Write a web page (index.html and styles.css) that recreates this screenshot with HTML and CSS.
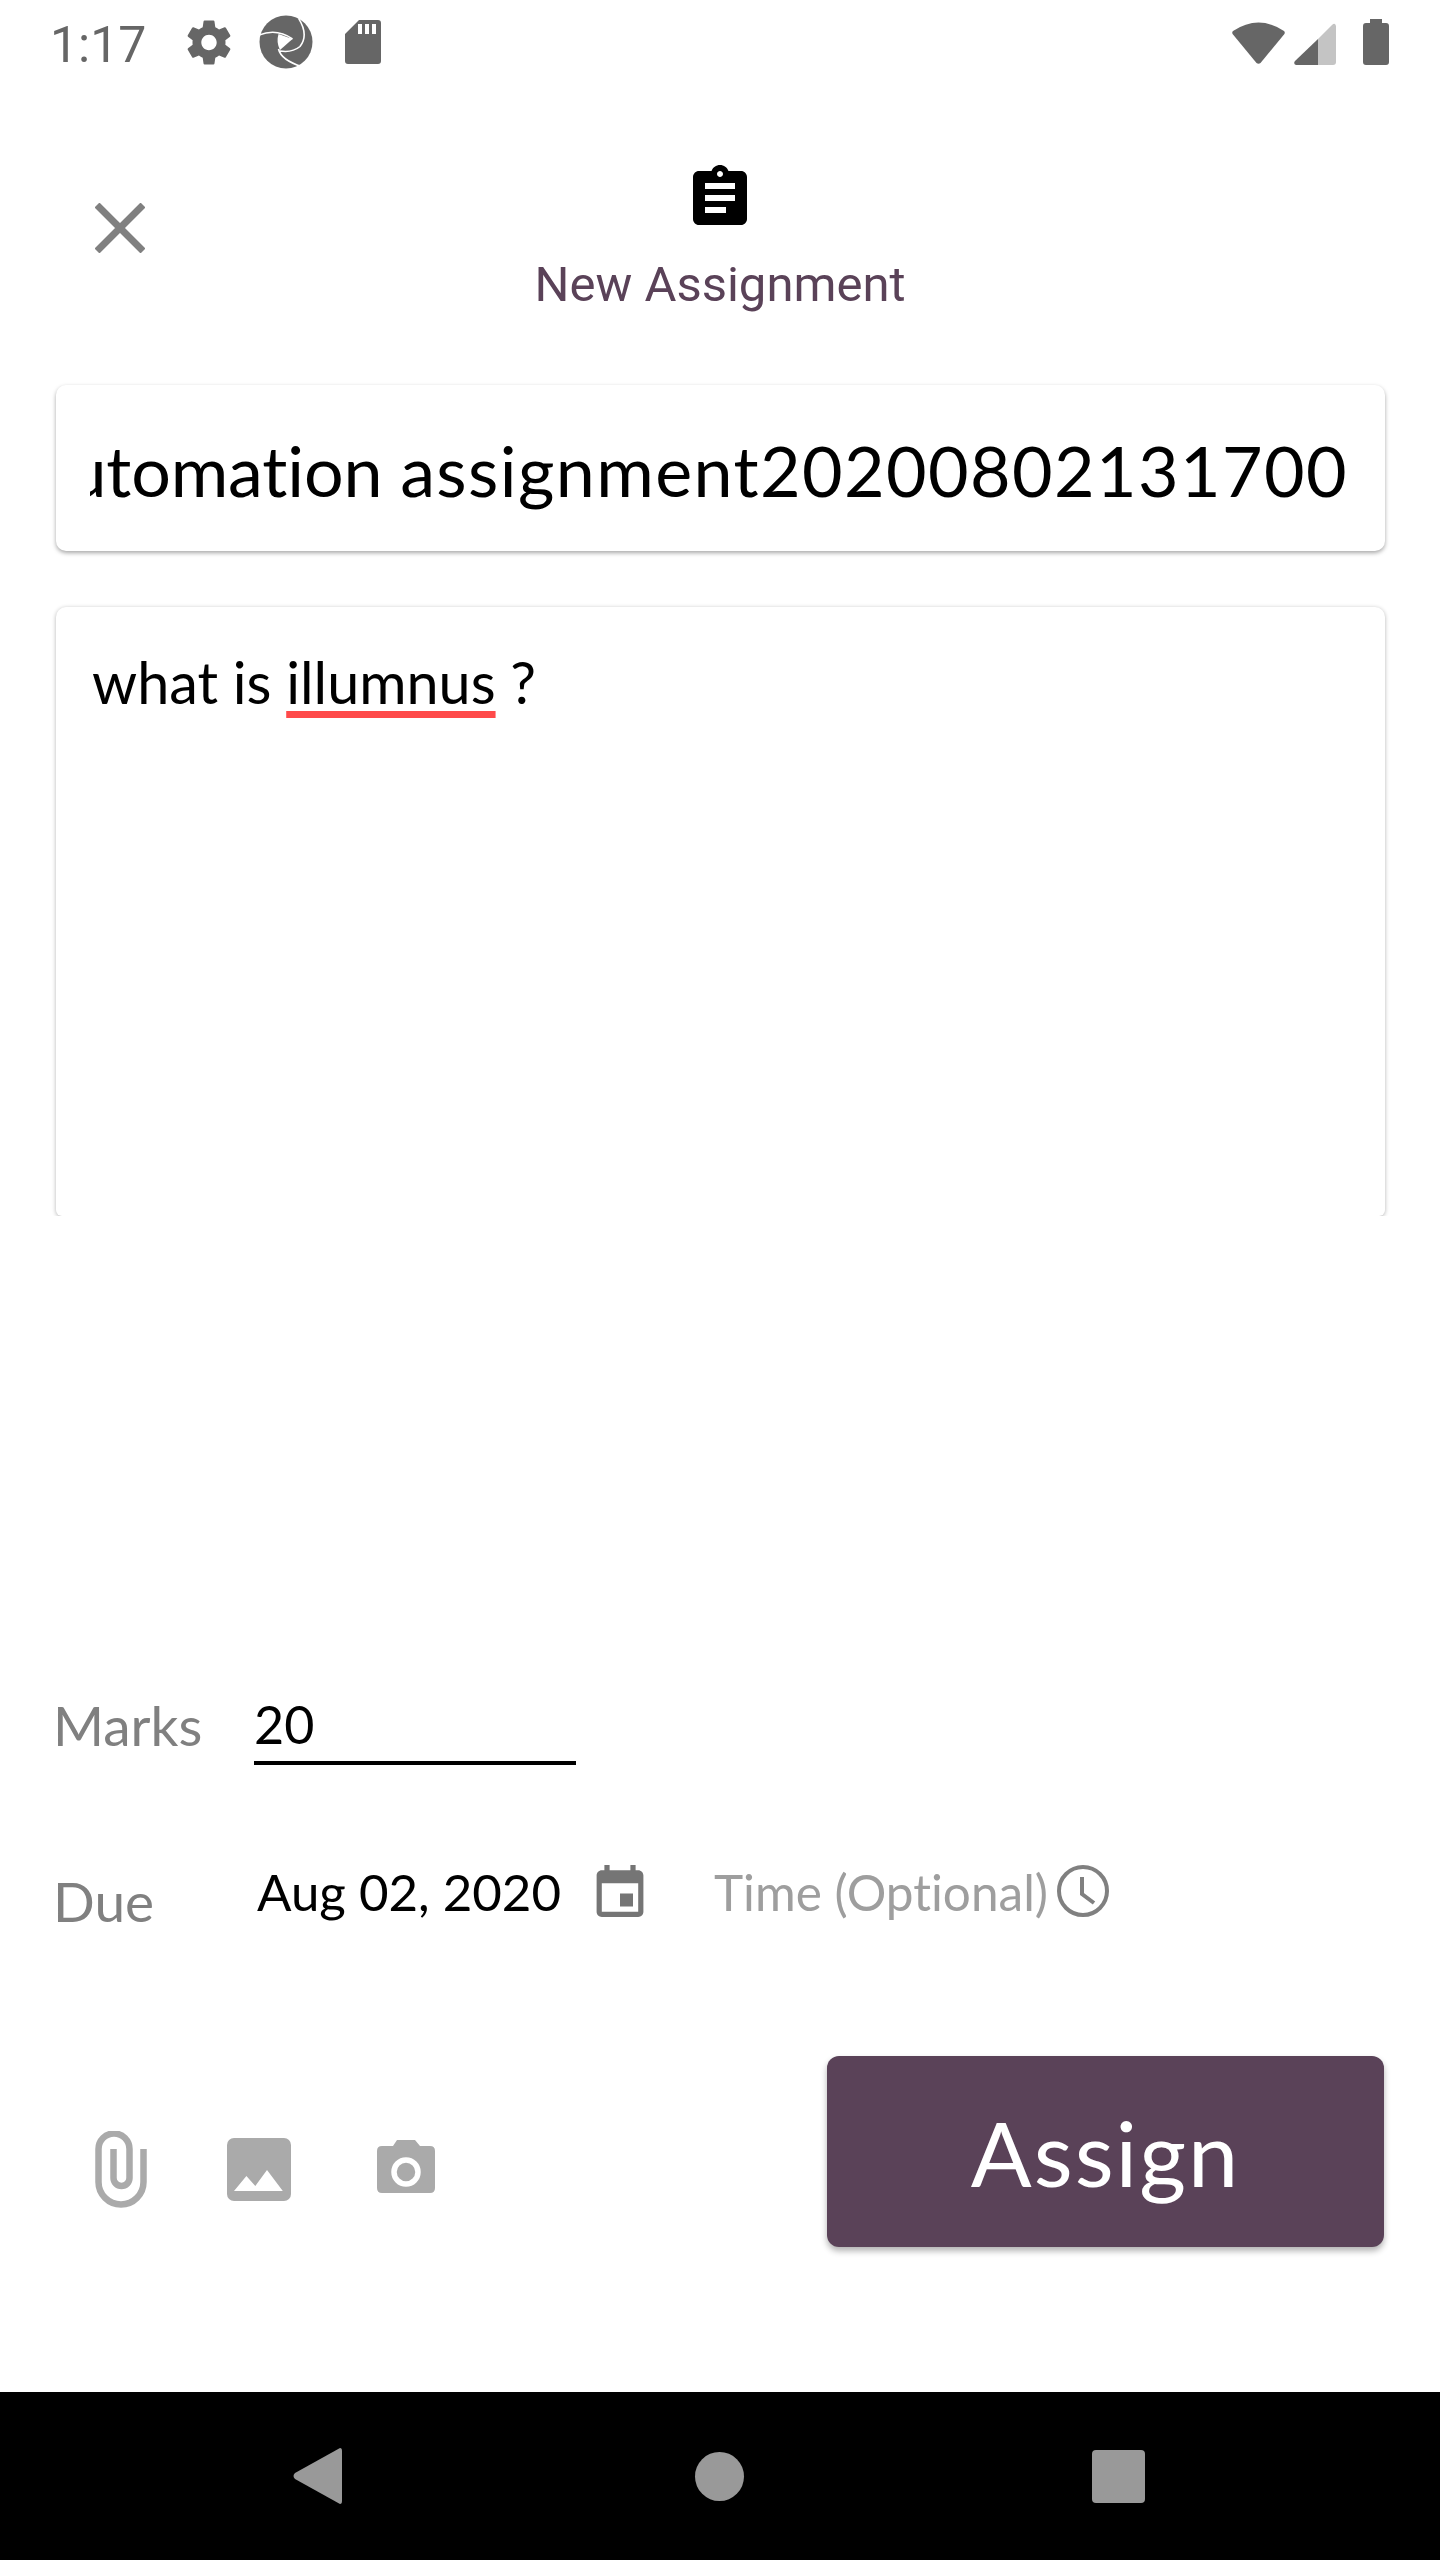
FILE: index.html
```html
<!DOCTYPE html>
<html lang="en">
<head>
    <meta charset="UTF-8">
    <meta name="viewport" content="width=device-width, initial-scale=1.0">
    <title>New Assignment</title>
    <link rel="stylesheet" href="styles.css">
</head>
<body>
    <div class="screen">
        <div class="status-bar">
            <span class="clock-text">1:17</span>
            <svg class="st-gear" viewBox="2 2 20 20"><path d="M19.43 12.98c.04-.32.07-.64.07-.98s-.03-.66-.07-.98l2.11-1.65c.19-.15.24-.42.12-.64l-2-3.46c-.12-.22-.39-.3-.61-.22l-2.49 1c-.52-.4-1.08-.73-1.69-.98l-.38-2.65C14.46 2.18 14.25 2 14 2h-4c-.25 0-.46.18-.49.42l-.38 2.65c-.61.25-1.17.59-1.69.98l-2.49-1c-.23-.09-.49 0-.61.22l-2 3.46c-.13.22-.07.49.12.64l2.11 1.65c-.04.32-.07.65-.07.98s.03.66.07.98l-2.11 1.65c-.19.15-.24.42-.12.64l2 3.46c.12.22.39.3.61.22l2.49-1c.52.4 1.08.73 1.69.98l.38 2.65c.03.24.24.42.49.42h4c.25 0 .46-.18.49-.42l.38-2.65c.61-.25 1.17-.59 1.69-.98l2.49 1c.23.09.49 0 .61-.22l2-3.46c.12-.22.07-.49-.12-.64l-2.11-1.65zM12 15.5c-1.93 0-3.5-1.57-3.5-3.5s1.57-3.5 3.5-3.5 3.5 1.57 3.5 3.5-1.57 3.5-3.5 3.5z"/></svg>
            <svg class="st-logo" viewBox="0 0 54 54">
                <circle cx="27" cy="27" r="26.5"/>
                <path class="hole" d="M19.500 19L33.500 24L21 35Q17 27 19.500 19z"/>
                <path class="swirl" d="M0 20Q18 13 33.500 24M39.600 3.400Q50 20 41 31.500Q33 38 21 36M19.500 34Q22 45 43 51.700"/>
            </svg>
            <svg class="st-sd" viewBox="0 0 36 44"><path d="M14 0H33a3 3 0 0 1 3 3V41a3 3 0 0 1-3 3H3a3 3 0 0 1-3-3V14zM13 4V14H17V4zM20 4V14H24V4zM27 4V14H31V4z" fill-rule="evenodd"/></svg>
            <div class="st-right">
                <svg class="st-wifi" viewBox="0 0 53 43"><path d="M1 10Q26.500-7 52 10Q53.500 11.500 52 13.500L28.500 42Q26.500 43.500 24.500 42L1 13.500Q-.500 11.500 1 10z"/></svg>
                <svg class="st-signal" viewBox="0 0 42 42">
                    <path class="dim" d="M24 16V42H39Q42 42 42 39V3Q41 -1 38 2z"/>
                    <path d="M24 16L1 38Q-1 41 2 42H24z"/>
                </svg>
                <svg class="st-battery" viewBox="0 0 26 46"><path d="M7 0H19V4H23Q26 4 26 7V43Q26 46 23 46H3Q0 46 0 43V7Q0 4 3 4H7z"/></svg>
            </div>
        </div>

        <div class="top-bar">
            <svg class="close-icon" viewBox="0 0 50 50"><path d="M2 2L48 48M48 2L2 48"/></svg>
            <div class="top-title">
                <svg class="assign-icon" viewBox="0 0 24 24"><path d="M19 3h-4.180C14.400 1.840 13.300 1 12 1c-1.300 0-2.400.84-2.820 2H5c-1.100 0-2 .9-2 2v14c0 1.100.9 2 2 2h14c1.100 0 2-.9 2-2V5c0-1.100-.9-2-2-2zm-7 0c.55 0 1 .45 1 1s-.45 1-1 1-1-.45-1-1 .45-1 1-1zm2 14H7v-2h7v2zm3-4H7v-2h10v2zm0-4H7V7h10v2z"/></svg>
                <div class="title-text">New Assignment</div>
            </div>
        </div>

        <div class="card title-card">
            <div class="title-clip">
                <span class="title-value"><span class="title-head">automation </span>assignment20200802131700</span>
            </div>
        </div>

        <div class="card body-card">
            what is <span class="misspelt">illumnus</span> ?
        </div>

        <div class="marks-row">
            <span class="label">Marks</span>
            <span class="marks-input">20</span>
        </div>

        <div class="due-row">
            <span class="label due-label">Due</span>
            <span class="due-date">Aug 02, 2020</span>
            <svg class="cal-icon" viewBox="3 1 18 20"><path d="M17 12h-5v5h5v-5zM16 1v2H8V1H6v2H5c-1.110 0-1.990.9-1.990 2L3 19c0 1.100.89 2 2 2h14c1.100 0 2-.9 2-2V5c0-1.100-.9-2-2-2h-1V1h-2zm3 18H5V8h14v11z"/></svg>
            <span class="due-time">Time (Optional)</span>
            <svg class="time-icon" viewBox="0 0 52 52">
                <circle cx="26" cy="26" r="24"/>
                <path d="M25 12V29L37 38"/>
            </svg>
        </div>

        <div class="action-row">
            <svg class="clip-icon" viewBox="0 0 52 77"><path d="M48.500 18V51A22.500 22.500 0 0 1 3.500 51V18A15.500 15.500 0 0 1 34.500 18V47A8 8 0 0 1 18.500 47V18"/></svg>
            <svg class="image-icon" viewBox="0 0 64 63">
                <rect width="64" height="63" rx="7"/>
                <path class="cut" d="M7 53L19.400 38L28.300 48L40 32L55.800 53z"/>
            </svg>
            <svg class="camera-icon" viewBox="0 0 58 53">
                <path d="M16 6L20 0H38L43 6H53Q58 6 58 11V48Q58 53 53 53H5Q0 53 0 48V11Q0 6 5 6z"/>
                <circle class="lens" cx="29" cy="32" r="12"/>
            </svg>
            <button class="assign-btn">Assign</button>
        </div>

        <div class="nav-bar">
            <svg class="nav-back" viewBox="0 0 49 56"><path d="M47 0Q49 0 49 3V53Q49 56 47 56L2 31Q-1 28 2 25z"/></svg>
            <div class="nav-home"></div>
            <div class="nav-recent"></div>
        </div>
    </div>
</body>
</html>
```

FILE: styles.css
```css
body {
    margin: 0;
    background-color: #fff;
    font-family: Lato, "Noto Sans", sans-serif;
    font-variant-ligatures: none;
}
svg {
    display: block;
    flex: none;
}
.screen {
    width: 1440px;
    height: 2560px;
    display: flex;
    flex-direction: column;
    overflow: hidden;
}

/* status bar */
.status-bar {
    height: 88px;
    display: flex;
    align-items: center;
    padding: 0 51px 4px 50px;
    box-sizing: border-box;
    fill: #666;
}
.clock-text {
    font-family: Roboto, sans-serif;
    font-size: 50px;
    color: #666;
    width: 137px;
    padding-top: 6px;
}
.st-gear {
    width: 44px;
    height: 45px;
}
.st-logo {
    width: 54px;
    height: 54px;
    margin-left: 28px;
}
.hole {
    fill: #fff;
}
.swirl {
    fill: none;
    stroke: #fff;
    stroke-width: 1.600;
}
.st-sd {
    width: 36px;
    height: 44px;
    margin-left: 32px;
}
.st-right {
    margin-left: auto;
    display: flex;
    align-items: center;
}
.st-wifi {
    width: 53px;
    height: 43px;
}
.st-signal {
    width: 42px;
    height: 42px;
    margin-left: 9px;
    margin-top: 3px;
}
.dim {
    fill: #c4c4c4;
}
.st-battery {
    width: 26px;
    height: 46px;
    margin-left: 27px;
}

/* header */
.top-bar {
    height: 274px;
    position: relative;
    box-sizing: border-box;
    padding-top: 74px;
}
.close-icon {
    position: absolute;
    left: 95px;
    top: 115px;
    width: 50px;
    height: 50px;
    fill: none;
    stroke: #808080;
    stroke-width: 7;
}
.top-title {
    display: flex;
    flex-direction: column;
    align-items: center;
}
.assign-icon {
    width: 72px;
    height: 72px;
}
.title-text {
    font-family: Roboto, sans-serif;
    font-size: 49px;
    line-height: 56px;
    margin-top: 23px;
    color: #5a4258;
}

/* text cards */
.card {
    margin: 0 55px 0 56px;
    background: #fff;
    border-radius: 10px;
    box-sizing: border-box;
    box-shadow: 0 1px 4px rgba(0, 0, 0, 0.3);
}
.title-card {
    height: 166px;
    margin-top: 23px;
    padding: 3px 37px 0 34px;
    display: flex;
    align-items: center;
    box-shadow: 0 2px 4px rgba(0, 0, 0, 0.35);
}
.title-clip {
    width: 100%;
    overflow: hidden;
    display: flex;
    justify-content: flex-end;
}
.title-value {
    font-size: 70px;
    letter-spacing: 1.400px;
    line-height: 90px;
    white-space: pre;
    color: #000;
    flex: none;
}
.title-head {
    letter-spacing: -.15px;
}
.body-card {
    height: 609px;
    margin-top: 56px;
    padding: 40px 36px;
    font-size: 57.500px;
    line-height: 70px;
    color: #000;
    border-radius: 10px 10px 6px 6px;
    clip-path: inset(-6px -6px 0 -6px);
}
.misspelt {
    text-decoration: underline;
    text-decoration-color: #ff4a4a;
    text-decoration-thickness: 7px;
    text-underline-offset: 7px;
}

/* marks and due */
.marks-row {
    height: 100px;
    margin-top: 465px;
    padding-left: 53px;
    display: flex;
}
.label {
    font-size: 55px;
    line-height: 70px;
    color: #808080;
    width: 201px;
    flex: none;
    padding-top: 9px;
}
.marks-input {
    width: 322px;
    height: 72px;
    padding-top: 8px;
    border-bottom: 4px solid #000;
    font-size: 52px;
    line-height: 70px;
    color: #000;
}
.due-row {
    height: 145px;
    margin-top: 76px;
    padding-left: 53px;
    display: flex;
    align-items: flex-start;
    fill: #757575;
}
.due-label {
    margin-top: 0;
    width: 204px;
}
.due-date {
    font-size: 51px;
    line-height: 70px;
    color: #000;
    width: 339px;
}
.cal-icon {
    width: 48px;
    height: 52px;
    margin-top: 8px;
}
.due-time {
    font-size: 49.500px;
    line-height: 70px;
    color: #9e9e9e;
    margin-left: 70px;
    width: 343px;
    white-space: nowrap;
}
.time-icon {
    width: 52px;
    height: 52px;
    margin-top: 8px;
    fill: none;
    stroke: #808080;
    stroke-width: 4;
}

/* attachments and submit */
.action-row {
    height: 334px;
    position: relative;
}
.clip-icon {
    position: absolute;
    left: 95px;
    top: 129px;
    width: 52px;
    height: 77px;
    fill: none;
    stroke: #aaa;
    stroke-width: 6.500;
}
.image-icon {
    position: absolute;
    left: 227px;
    top: 136px;
    width: 64px;
    height: 63px;
    fill: #aaa;
}
.cut {
    fill: #fff;
}
.camera-icon {
    position: absolute;
    left: 377px;
    top: 138px;
    width: 58px;
    height: 53px;
    fill: #aaa;
}
.lens {
    fill: #aaa;
    stroke: #fff;
    stroke-width: 5.500;
}
.assign-btn {
    position: absolute;
    left: 827px;
    top: 54px;
    width: 557px;
    height: 191px;
    background-color: #5a4258;
    color: #fff;
    border: none;
    border-radius: 12px;
    font-family: Lato, sans-serif;
    font-weight: 400;
    font-size: 90px;
    letter-spacing: 2px;
    box-shadow: 0 4px 6px rgba(0, 0, 0, 0.3);
}

/* android nav */
.nav-bar {
    height: 168px;
    margin-top: auto;
    background: #000;
    display: flex;
    align-items: center;
    fill: #999;
    padding-left: 293px;
}
.nav-back {
    width: 49px;
    height: 56px;
}
.nav-home {
    width: 49px;
    height: 49px;
    border-radius: 50%;
    background: #999;
    margin-left: 353px;
}
.nav-recent {
    width: 53px;
    height: 53px;
    border-radius: 4px;
    background: #999;
    margin-left: 348px;
}
```
